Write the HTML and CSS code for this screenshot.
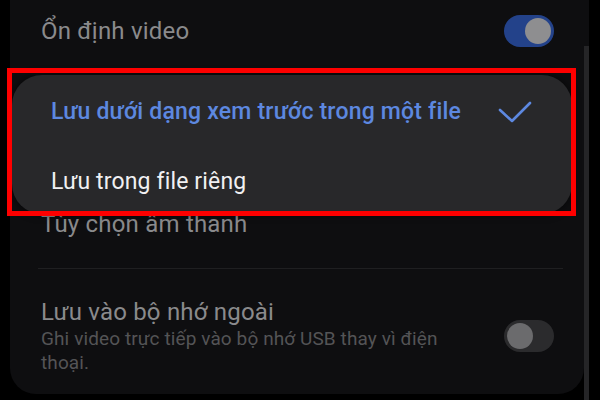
FILE: index.html
```html
<!doctype html>
<html>
<head>
<meta charset="utf-8">
<title>Cài đặt video</title>
<link rel="stylesheet" href="styles.css">
</head>
<body>
	<div class="screen">
		<div class="card">
			<div class="row row_top">
				<div class="title">Ổn định video</div>
				<span class="toggle on"><span class="knob"></span></span>
			</div>
			<div class="row row_audio">
				<div class="title">Tùy chọn âm thanh</div>
			</div>
			<div class="divider"></div>
			<div class="row row_usb">
				<div class="text">
					<div class="title">Lưu vào bộ nhớ ngoài</div>
					<div class="sub">Ghi video trực tiếp vào bộ nhớ USB thay vì điện thoại.</div>
				</div>
				<span class="toggle"><span class="knob"></span></span>
			</div>
		</div>
		<div class="scrollbar"></div>

		<div class="popup">
			<div class="item active">
				<span>Lưu dưới dạng xem trước trong một file</span>
				<svg class="check" width="34" height="28" viewBox="0 0 34 28">
					<polyline points="2,12 14,23 32,5" fill="none" stroke="#5d88e0" stroke-width="2.6" stroke-linecap="round" stroke-linejoin="round"/>
				</svg>
			</div>
			<div class="item">
				<span>Lưu trong file riêng</span>
			</div>
		</div>
		<div class="mark"></div>
	</div>
</body>
</html>
```

FILE: styles.css
```css
*{margin:0; padding:0; box-sizing:border-box;}
html,body{height:400px; overflow:hidden;}
body{background:#000; font-family:Roboto, "Noto Sans", Arial, sans-serif;}

.screen{position:relative; display:flex; height:400px; padding-left:10px;}
.card{width:574px; height:394px; background:#0e0e10; border-radius:0 0 26px 26px; padding:0 30px 0 31px;}
.scrollbar{width:5px; height:400px; background:linear-gradient(#0e0e10 46px, #252527 46px);}

.row{display:flex; align-items:center; justify-content:space-between;}
.title{font-size:24px; line-height:30px; color:#8a8a8c; letter-spacing:.2px;}
.row_top{height:62px;}
.row_audio{padding-top:147px; padding-bottom:29px;}
.divider{height:1px; background:#1f1f21; margin:0 -9px 0 -3px;}
.row_usb{padding-top:28px;}
.row_usb .text{width:440px;}
.sub{font-size:19px; line-height:24px; color:#545456; letter-spacing:.1px;}

.toggle{display:flex; align-items:center; width:50px; height:32px; border-radius:16px; background:#2b2b2d; padding:0 3px;}
.toggle .knob{width:26px; height:26px; border-radius:50%; background:#6b6b6d;}
.toggle.on{background:#23428a; justify-content:flex-end;}
.toggle.on .knob{background:#8e8e90;}

.popup{position:absolute; left:12px; top:75px; width:560px; height:139px; padding-top:1px; background:#28282a; border-radius:30px; box-shadow:0 0 8px rgba(0,0,0,.6); overflow:hidden;}
.popup .item{display:flex; align-items:center; justify-content:space-between; height:70px; padding:0 40px 0 39px; font-size:23px; color:#f0f0f2; letter-spacing:.15px;}
.popup .item.active{color:#5d88e0; font-weight:500; letter-spacing:.2px;}
.popup .check{margin-top:2px;}

.mark{position:absolute; left:7px; top:68px; width:569px; height:148px; border:5px solid #fe0000;}
```
